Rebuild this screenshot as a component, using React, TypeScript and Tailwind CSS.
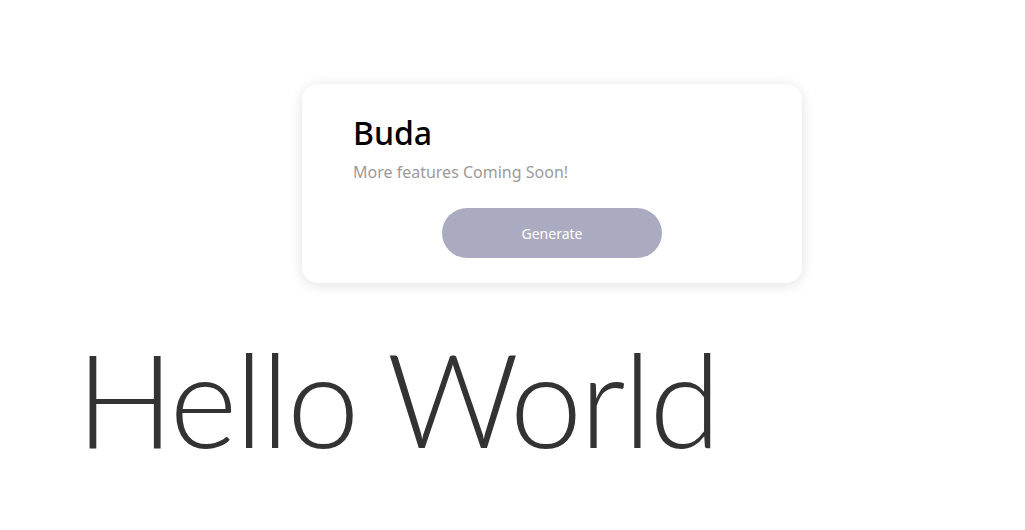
import React from "react";

export default function App() {
  return (
    <div className="w-[1025px] h-[530px] bg-white overflow-hidden" style={{ fontFamily: '"Noto Sans", "Open Sans", sans-serif' }}>
      <div className="pt-[84px] pl-[302px]">
        <div className="w-[500px] rounded-[16px] bg-white shadow-[0_2px_14px_rgba(0,0,0,0.12)] pt-[26px] pb-[25px] pl-[51px] pr-[51px]">
          <div className="text-[32px] leading-[45px] font-medium text-black">Buda</div>
          <div className="mt-[5px] text-[16px] leading-[24px] text-[#9c9a9a]">More features Coming Soon!</div>
          <div className="mt-[24px] flex justify-center">
            <button className="w-[220px] h-[50px] rounded-full bg-[#aaabc0] text-white text-[14px]">Generate</button>
          </div>
        </div>
      </div>
      <div
        className="pl-[76px] mt-[37px] text-[130px] leading-[1.2] font-light tracking-[-2.6px] text-[#333333] whitespace-nowrap"
        style={{ fontFamily: 'Lato, "Open Sans", sans-serif' }}
      >
        Hello World
      </div>
    </div>
  );
}
